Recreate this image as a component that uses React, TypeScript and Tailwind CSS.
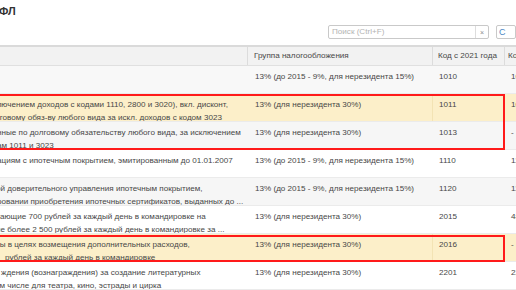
import React from 'react';

type Row = {
  lines: { text: string; cls: string }[];
  group: string;
  code: string;
  old: string;
  bg: string;
};

const rows: Row[] = [
  {
    lines: [],
    group: '13% (до 2015 - 9%, для нерезидента 15%)',
    code: '1010',
    old: '1010',
    bg: 'bg-[#f8f8f8]',
  },
  {
    lines: [
      { text: 'ключением доходов с кодами 1110, 2800 и 3020), вкл. дисконт,', cls: 'ml-[-7px]' },
      { text: 'лговому обяз-ву любого вида за искл. доходов с кодом 3023', cls: 'ml-[-5px]' },
    ],
    group: '13% (для нерезидента 30%)',
    code: '1011',
    old: '1011',
    bg: 'bg-[#fcefc9]',
  },
  {
    lines: [
      { text: 'нные по долговому обязательству любого вида, за исключением', cls: 'ml-[-3px]' },
      { text: 'ам 1011 и 3023', cls: 'ml-[-3px]' },
    ],
    group: '13% (для нерезидента 30%)',
    code: '1013',
    old: '-',
    bg: 'bg-[#f6f6f6]',
  },
  {
    lines: [{ text: 'ациям с ипотечным покрытием, эмитированным до 01.01.2007', cls: 'ml-[-3px]' }],
    group: '13% (до 2015 - 9%, для нерезидента 15%)',
    code: '1110',
    old: '1110',
    bg: 'bg-white',
  },
  {
    lines: [
      { text: 'ой доверительного управления ипотечным покрытием,', cls: 'ml-[-4px]' },
      { text: 'ровании приобретения ипотечных сертификатов, выданных до ...', cls: 'ml-[-3px]' },
    ],
    group: '13% (до 2015 - 9%, для нерезидента 15%)',
    code: '1120',
    old: '1120',
    bg: 'bg-[#f6f6f6]',
  },
  {
    lines: [
      { text: 'ающие 700 рублей за каждый день в командировке на', cls: 'ml-[0px]' },
      { text: 'не более 2 500 рублей за каждый день в командировке за ...', cls: 'ml-[-4px]' },
    ],
    group: '13% (для нерезидента 30%)',
    code: '2015',
    old: '4800',
    bg: 'bg-white',
  },
  {
    lines: [
      { text: 'ты в целях возмещения дополнительных расходов,', cls: 'ml-[-4px]' },
      { text: 'рублей за каждый день в командировке', cls: 'ml-[5px]' },
    ],
    group: '13% (для нерезидента 30%)',
    code: '2016',
    old: '-',
    bg: 'bg-[#fcefc9]',
  },
  {
    lines: [
      { text: 'ждения (вознаграждения) за создание литературных', cls: 'ml-[1px]' },
      { text: 'ом числе для театра, кино, эстрады и цирка', cls: 'ml-[-5px]' },
    ],
    group: '13% (для нерезидента 30%)',
    code: '2201',
    old: '2201',
    bg: 'bg-white',
  },
];

function TableRow({ row }: { row: Row }) {
  const selected = row.bg === 'bg-[#fcefc9]';
  return (
    <div className={`flex h-[28px] border-b border-[#ebebeb] ${row.bg}`}>
      <div className="w-[248px] shrink-0 overflow-hidden pt-[4px]">
        {row.lines.map((l, i) => (
          <div key={i} className={`whitespace-nowrap leading-[13px] ${l.cls}`}>
            {l.text}
          </div>
        ))}
      </div>
      <div
        className={`w-[185px] shrink-0 pl-[7px] pt-[4px] leading-[13px] whitespace-nowrap ${
          selected ? 'border-r border-[#f3e3b4]' : ''
        }`}
      >
        {row.group}
      </div>
      <div className="w-[72px] shrink-0 pl-[6px] pt-[4px] leading-[13px]">{row.code}</div>
      <div className="flex-1 pl-[6px] pt-[4px] leading-[13px] whitespace-nowrap">{row.old}</div>
    </div>
  );
}

export default function App() {
  return (
    <div
      className="w-[516px] h-[290px] overflow-hidden bg-white text-[#474747] text-[8.1px]"
      style={{ fontFamily: '"Liberation Sans", Arial, sans-serif' }}
    >
      <div className="h-[25px] pt-[4px]">
        <div className="ml-[-1px] text-[11px] font-bold leading-[14px] text-[#333333]">ФЛ</div>
      </div>

      <div className="flex h-[20px] items-start justify-end">
        <div className="flex h-[14px] w-[161px] rounded-[2px] border border-[#c9c9c9] bg-white">
          <div className="flex flex-1 items-center pl-[3px] text-[#b3b3b3] leading-none">
            Поиск (Ctrl+F)
          </div>
          <div className="flex w-[13px] items-center justify-center border-l border-[#dddddd] text-[7px] leading-none text-[#8c8c8c]">
            ×
          </div>
        </div>
        <div className="ml-[7px] flex h-[14px] w-[20px] items-center rounded-[2px] border border-[#c9c9c9] bg-white pl-[2px] text-[9px] leading-none text-[#4b86c4]">
          С
        </div>
      </div>

      <div className="border-t-2 border-[#dadada]">
        <div className="flex h-[19px] items-center border-b border-[#e0e0e0] bg-[#f2f2f2]">
          <div className="h-full w-[248px] shrink-0 border-r border-[#dcdcdc]" />
          <div className="flex h-full w-[185px] shrink-0 items-center border-r border-[#dcdcdc] pl-[6px] whitespace-nowrap">
            Группа налогообложения
          </div>
          <div className="flex h-full w-[72px] shrink-0 items-center border-r border-[#dcdcdc] pl-[5px] whitespace-nowrap">
            Код с 2021 года
          </div>
          <div className="flex h-full flex-1 items-center pl-[3px] whitespace-nowrap">Код до 2021</div>
        </div>

        <TableRow row={rows[0]} />
        <div className="relative">
          <TableRow row={rows[1]} />
          <TableRow row={rows[2]} />
          <div className="pointer-events-none absolute left-[-4px] top-0 bottom-0 w-[509px] border-2 border-[#ff1a1a]" />
        </div>
        <TableRow row={rows[3]} />
        <TableRow row={rows[4]} />
        <TableRow row={rows[5]} />
        <div className="relative">
          <TableRow row={rows[6]} />
          <div className="pointer-events-none absolute left-[-4px] top-[1px] bottom-0 w-[509px] border-2 border-[#ff1a1a]" />
        </div>
        <TableRow row={rows[7]} />
      </div>
    </div>
  );
}
